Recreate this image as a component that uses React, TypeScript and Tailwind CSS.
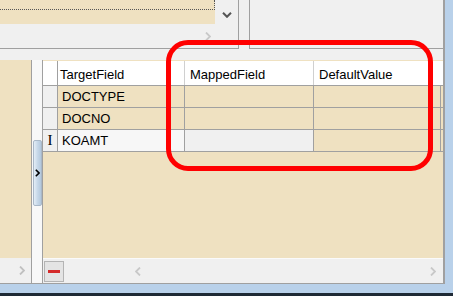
import React from "react";

const font = { fontFamily: '"Liberation Sans", Arial, sans-serif' };

function ChevronRight({ className }: { className?: string }) {
  return (
    <svg width="6" height="9" viewBox="0 0 6 9" className={className}>
      <path d="M1 0.5 L5 4.5 L1 8.5" fill="none" stroke="currentColor" strokeWidth="1.8" />
    </svg>
  );
}

function ChevronLeft({ className }: { className?: string }) {
  return (
    <svg width="6" height="9" viewBox="0 0 6 9" className={className}>
      <path d="M5 0.5 L1 4.5 L5 8.5" fill="none" stroke="currentColor" strokeWidth="1.8" />
    </svg>
  );
}

function ChevronDown({ className }: { className?: string }) {
  return (
    <svg width="10" height="6" viewBox="0 0 10 6" className={className}>
      <path d="M1 0.8 L5 4.8 L9 0.8" fill="none" stroke="currentColor" strokeWidth="2" />
    </svg>
  );
}

type Row = { name: string; marker?: boolean; editing?: boolean };

const rows: Row[] = [
  { name: "DOCTYPE" },
  { name: "DOCNO" },
  { name: "KOAMT", marker: true, editing: true },
];

function MappingGrid() {
  return (
    <div className="flex flex-col text-[13px] text-black" style={font}>
      <div className="flex h-[25px] bg-white border-b border-[#a0a0a0]">
        <div className="w-[15px] border-r border-[#a0a0a0]" />
        <div className="w-[127px] flex items-center pl-[2px] pt-[2px] border-r border-[#d0d0d0] leading-[15px]">
          TargetField
        </div>
        <div className="w-[129px] flex items-center pl-[5px] pt-[2px] border-r border-[#d0d0d0] leading-[15px]">
          MappedField
        </div>
        <div className="w-[127px] flex items-center pl-[5px] pt-[2px] leading-[15px]">
          DefaultValue
        </div>
      </div>
      {rows.map((row) => (
        <div key={row.name} className="flex h-[22px] border-b border-[#a0a0a0]">
          <div className="w-[15px] bg-[#f0f0f0] border-r border-[#a0a0a0] flex items-center justify-center">
            {row.marker && (
              <span
                className="text-[15px] leading-[15px]"
                style={{ fontFamily: '"Liberation Serif", serif' }}
              >
                I
              </span>
            )}
          </div>
          <div
            className={`w-[127px] flex items-center pl-[4px] border-r border-[#a0a0a0] leading-[15px] ${
              row.editing ? "bg-[#f7f7f7]" : "bg-[#efe1c1]"
            }`}
          >
            {row.name}
          </div>
          <div
            className={`w-[129px] border-r border-[#a0a0a0] ${
              row.editing ? "bg-[#f0f0f0]" : "bg-[#efe1c1]"
            }`}
          />
          <div className="w-[127px] bg-[#efe1c1] border-r border-[#a0a0a0]" />
        </div>
      ))}
    </div>
  );
}

export default function App() {
  return (
    <div className="relative w-[453px] h-[296px] overflow-hidden flex flex-col bg-[#f0f0f0]">
      <div className="flex h-[284px]">
        <div className="w-[445px] flex flex-col border-r-2 border-b border-[#a0a0a0]">
          {/* top panels */}
          <div className="flex h-[49px]">
            <div className="w-[239px] flex flex-col border-r border-b border-[#a0a0a0]">
              <div className="flex h-[24px]">
                <div className="w-[215px] bg-[#efe1c1]">
                  <div className="h-[10px] border-b border-r border-dotted border-[#555]" />
                </div>
                <div className="flex-1 flex justify-center pt-[12px] text-[#555]">
                  <ChevronDown />
                </div>
              </div>
              <div className="flex-1 flex items-center justify-end pr-[27px] text-[#c8c8c8]">
                <ChevronRight />
              </div>
            </div>
            <div className="w-[10px]" />
            <div className="flex-1 border-l border-b border-[#a0a0a0] bg-[#f0f0f0]" />
          </div>

          <div className="h-[11px]" />

          {/* bottom section */}
          <div className="flex flex-1">
            <div className="w-[32px] flex flex-col border-r border-[#a0a0a0]">
              <div className="h-[198px] bg-[#efe1c1]" />
              <div className="flex-1 flex items-center justify-end pr-[6px] text-[#c0c0c0]">
                <ChevronRight />
              </div>
            </div>

            <div className="w-[11px] flex flex-col items-center bg-[#f8f8f8] border-r border-[#a0a0a0]">
              <div className="mt-[80px] w-[9px] h-[66px] rounded-[2px] border border-[#a9b8c8] bg-gradient-to-r from-[#e4edf6] via-[#c7d8e9] to-[#b3c8dd] flex items-center justify-center text-black">
                <svg width="5" height="8" viewBox="0 0 5 8">
                  <path d="M0.8 0.8 L4 4 L0.8 7.2" fill="none" stroke="currentColor" strokeWidth="1.6" />
                </svg>
              </div>
            </div>

            <div className="flex-1 flex flex-col">
              <div className="h-[198px] bg-[#efe1c1] pt-[1px]">
                <MappingGrid />
              </div>
              <div className="flex-1 flex items-center border-t border-[#fafafa] bg-[#f0f0f0]">
                <div className="ml-[1px] w-[20px] h-[21px] border border-[#b4b4b4] bg-[#e4e4e4] flex items-center justify-center">
                  <div className="w-[12px] h-[3px] bg-[#d42a2a]" />
                </div>
                <div className="ml-[71px] text-[#c8c8c8] flex">
                  <ChevronLeft />
                </div>
                <div className="flex-1" />
                <div className="mr-[7px] text-[#c8c8c8] flex">
                  <ChevronRight />
                </div>
              </div>
            </div>
          </div>
        </div>
        <div className="flex-1 bg-[#b9d1ea]" />
      </div>
      <div className="h-[9px] bg-[#b9d1ea]" />
      <div className="flex-1 bg-[#1f2a36]" />

      {/* red highlight */}
      <div className="absolute left-[166px] top-[40px] w-[267px] h-[131px] border-[5px] border-[#ff0000] rounded-[22px] pointer-events-none" />
    </div>
  );
}
